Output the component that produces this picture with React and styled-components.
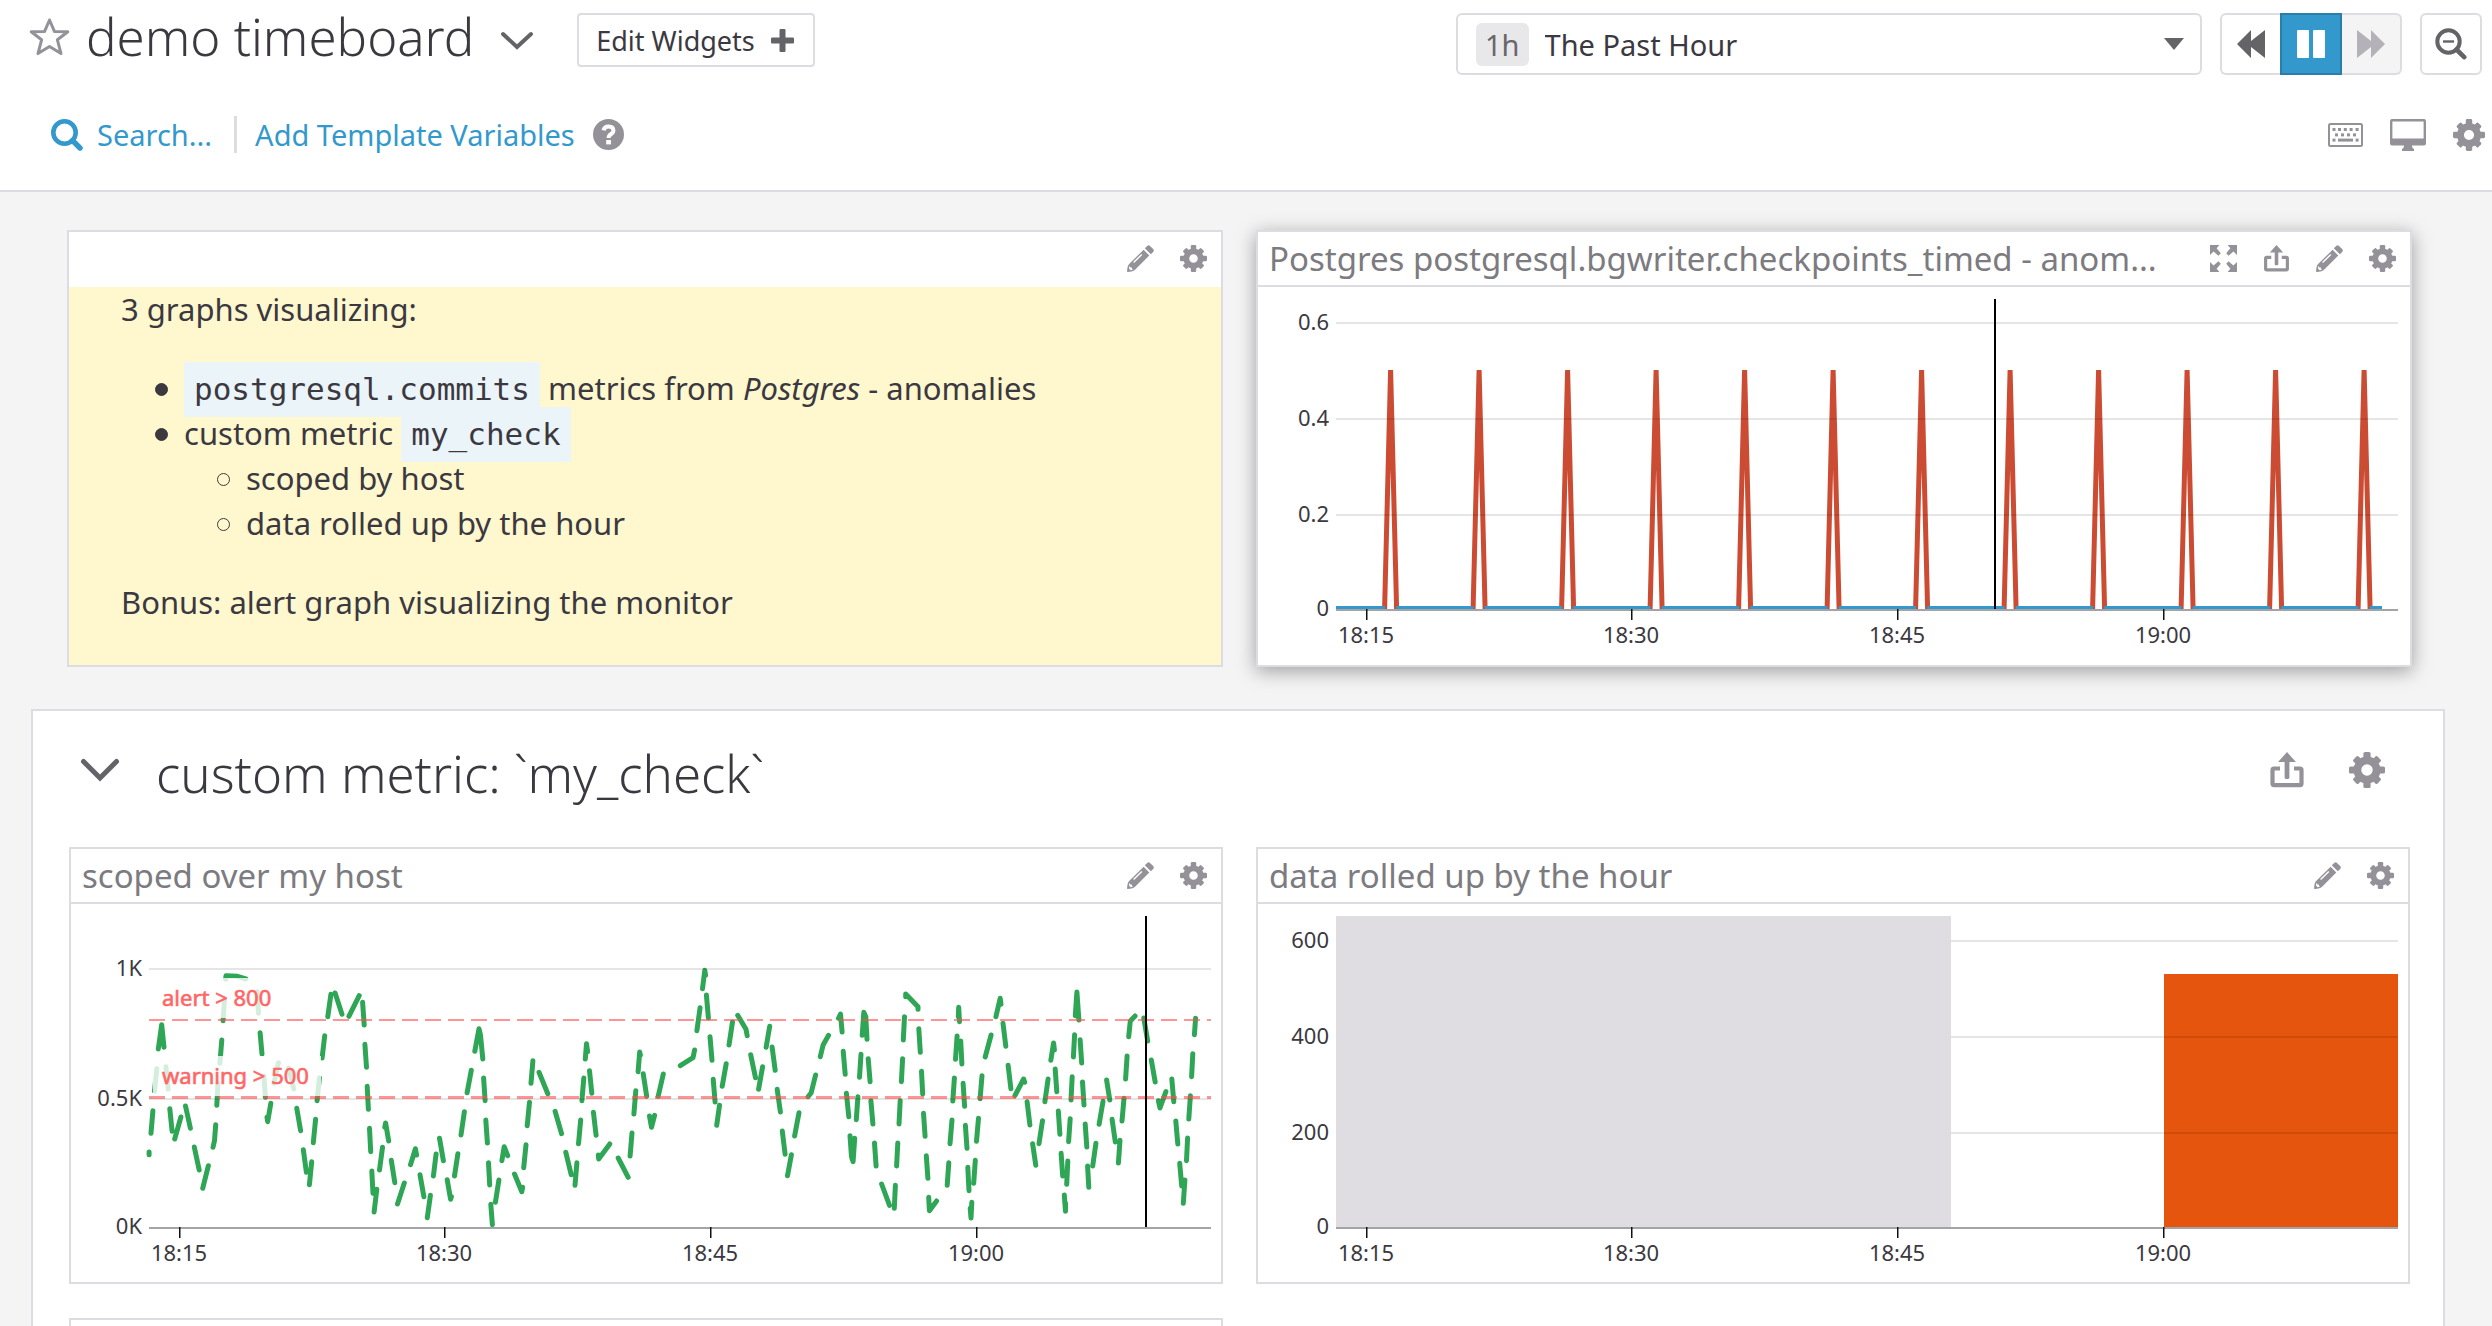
import React from "react";
import styled, { createGlobalStyle } from "styled-components";

const SANS = '"Noto Sans", "Open Sans", sans-serif';
const MONO = '"DejaVu Sans Mono", "Liberation Mono", monospace';
const LINE = "#dddce2";
const GREY = "#949298";
const INK = "#3b393f";
const BLUE = "#3399cc";

const GlobalStyle = createGlobalStyle`
  *, *::before, *::after { box-sizing: border-box; }
  body { margin: 0; background: #f4f4f4; color: ${INK}; font-family: ${SANS}; }
  button, select { font-family: inherit; color: inherit; }
`;

/* ---------- shell ---------- */

const Page = styled.div`
  height: 100vh;
  overflow: hidden;
  display: flex;
  flex-direction: column;
`;

const Header = styled.header`
  flex: none;
  display: flex;
  flex-direction: column;
  gap: 41px;
  padding: 13px 7px 37px 29px;
  background: #fff;
  border-bottom: 2px solid ${LINE};
`;

const Bar = styled.div`
  display: flex;
  justify-content: space-between;
  align-items: flex-start;
`;

const BarGroup = styled.div`
  display: flex;
  align-items: center;
  gap: ${(p) => p.$gap}px;
  height: ${(p) => p.$height}px;
  padding: 0 ${(p) => p.$end || 0}px 0 ${(p) => p.$start || 0}px;
`;

const TitleGroup = styled.div`
  display: flex;
  align-items: center;
  gap: 16px;
  padding-bottom: 8px;
`;

const Title = styled.h1`
  margin: 0;
  font-size: 51px;
  font-weight: 300;
  line-height: 54px;
  white-space: nowrap;
`;

const IconButton = styled.button`
  display: flex;
  flex: none;
  padding: 0;
  border: 0;
  background: none;
  color: ${(p) => p.$color || GREY};
  cursor: pointer;
  svg { display: block; }
`;

const EditButton = styled.button`
  display: flex;
  align-items: center;
  gap: 16px;
  height: 54px;
  padding: 0 19px 0 17px;
  margin-left: 17px;
  border: 2px solid ${LINE};
  border-radius: 4px;
  background: #fff;
  font-size: 27px;
  cursor: pointer;
`;

const RangeBox = styled.label`
  display: flex;
  align-items: center;
  gap: 16px;
  width: 746px;
  height: 62px;
  padding: 0 16px 0 18px;
  border: 2px solid ${LINE};
  border-radius: 6px;
  background: #fff;
`;

const RangeBadge = styled.span`
  padding: 0 9px;
  border-radius: 6px;
  background: #e8e8ea;
  color: #68666c;
  font-size: 29px;
  line-height: 43px;
`;

const RangeSelect = styled.select`
  flex: 1;
  min-width: 0;
  height: 43px;
  padding: 0;
  border: 0;
  appearance: none;
  background: none;
  font-size: 29px;
`;

const Playback = styled.div`
  display: flex;
`;

const PlayButton = styled.button`
  display: flex;
  align-items: center;
  justify-content: center;
  width: ${(p) => p.$width || 62}px;
  height: 62px;
  padding: 0;
  border: 2px solid ${(p) => (p.$active ? "#2a7ea8" : LINE)};
  border-width: ${(p) => p.$edges || "2px"};
  border-radius: ${(p) => p.$corners || "0"};
  background: ${(p) => (p.$active ? BLUE : p.disabled ? "#f4f4f4" : "#fff")};
  color: ${(p) => (p.$active ? "#fff" : p.disabled ? "#b4b2b8" : "#646367")};
`;

const TextLink = styled.a`
  display: flex;
  align-items: center;
  gap: 14px;
  color: ${BLUE};
  font-size: 29px;
  line-height: 37px;
  text-decoration: none;
  white-space: nowrap;
`;

const Divider = styled.span`
  width: 3px;
  height: 37px;
  margin-left: 4px;
  background: ${LINE};
`;

/* ---------- board ---------- */

const Board = styled.main`
  flex: 1;
  min-height: 0;
  padding: 38px 0 0;
`;

const Grid = styled.div`
  display: grid;
  grid-template-columns: 1fr 1fr;
  gap: 34px 33px;
  padding: 0 ${(p) => p.$end}px 0 ${(p) => p.$start}px;
`;

const Card = styled.section`
  min-width: 0;
  border: 2px solid ${LINE};
  background: #fff;
  box-shadow: ${(p) => (p.$raised ? "0 4px 18px rgba(0, 0, 0, 0.36)" : "none")};
`;

const CardHead = styled.header`
  display: flex;
  align-items: center;
  justify-content: space-between;
  gap: 24px;
  height: 55px;
  padding: 0 14px 0 11px;
  border-bottom: 2px solid ${(p) => (p.$plain ? "#fff" : LINE)};
`;

const CardTitle = styled.h3`
  margin: 0;
  min-width: 0;
  overflow: hidden;
  color: #7c7b7f;
  font-size: 33px;
  font-weight: 400;
  line-height: 50px;
  white-space: nowrap;
`;

const Actions = styled.div`
  display: flex;
  align-items: center;
  gap: ${(p) => p.$gap || 26}px;
`;

const Note = styled.div`
  height: 378px;
  padding: 0 52px;
  background: #fff8cf;
  font-size: 31px;
  line-height: 45px;
  p { margin: 0; }
  ul { margin: 34px 0; padding-left: 63px; list-style: none; }
  ul ul { margin: 0; padding-left: 62px; }
  li::before {
    content: "";
    display: inline-block;
    width: 13px;
    height: 13px;
    margin: 0 16px 0 -29px;
    border: 1px solid ${INK};
    border-radius: 50%;
    background: ${INK};
    vertical-align: 4px;
  }
  ul ul li::before { background: none; }
`;

const Code = styled.code`
  padding: 9px 10px 10px;
  background: #ebf4f9;
  font-family: ${MONO};
  font-size: 31px;
  line-height: 1;
`;

const Group = styled.section`
  margin: 42px 47px 0 31px;
  border: 2px solid ${LINE};
  background: #fff;
`;

const GroupHead = styled.header`
  display: flex;
  align-items: center;
  gap: 36px;
  height: 118px;
  margin-bottom: 18px;
  padding: 0 58px 0 47px;
`;

const GroupTitle = styled.h2`
  flex: 1;
  margin: 0;
  padding-top: 6px;
  font-size: 51px;
  font-weight: 300;
  line-height: 60px;
`;

const ChartSvg = styled.svg`
  display: block;
  width: 100%;
  height: auto;
  font-family: ${SANS};
  font-size: 22px;
  fill: ${INK};
`;

/* ---------- icons ---------- */

const Gear = ({ size = 27 }) => (
  <svg width={size} height={size} viewBox="-18 -18 36 36" aria-hidden="true">
    <circle r="9.6" fill="none" stroke="currentColor" strokeWidth="7.8" />
    {[0, 45, 90, 135, 180, 225, 270, 315].map((a) => (
      <rect key={a} x="-3.6" y={a % 90 ? -17 : -18} width="7.2" height="8" rx="1.6" fill="currentColor" transform={`rotate(${a})`} />
    ))}
  </svg>
);

const Pencil = () => (
  <svg width="27" height="27" viewBox="0 0 27 27" aria-hidden="true">
    <path d="M17.8 3.2 L20.2 .9 Q21.6 -.3 23 .9 L26.2 4.1 Q27.4 5.6 26.2 7 L23.8 9.3 Z" fill="currentColor" />
    <path d="M16.6 4.7 L22.3 10.5 L8.6 24.2 Q6.8 26.2 4.6 26.5 L.8 27 Q0 27 0 26.2 L.5 22.4 Q.8 20.2 2.6 18.6 Z" fill="currentColor" />
    <path d="M6.6 17.6 L14.8 9.4" stroke="#fff" strokeWidth="1.4" />
    <path d="M2.4 20.8 L3.4 22.6 L5 22.4 L4.9 24 L6.4 24.6 L3.6 25.2 L2 23.6 Z" fill="#fff" />
  </svg>
);

const Share = ({ size = 27 }) => (
  <svg width={size} height={size} viewBox="-1.5 0 36 36" aria-hidden="true">
    <path d="M9.5 16.5 H3.4 Q2 16.5 2 17.9 V31.6 Q2 33.2 3.4 33.2 H29.6 Q31 33.2 31 31.6 V17.9 Q31 16.5 29.6 16.5 H23.5" fill="none" stroke="currentColor" strokeWidth="4.2" />
    <path d="M16.5 0 L25.4 10 H18.9 V25.6 Q18.9 27 17.5 27 H15.5 Q14.1 27 14.1 25.6 V10 H7.6 Z" fill="currentColor" />
  </svg>
);

const Expand = () => (
  <svg width="27" height="27" viewBox="0 0 27 27" fill="currentColor" aria-hidden="true">
    {["", "translate(27 0) scale(-1 1)", "translate(0 27) scale(1 -1)", "translate(27 27) scale(-1 -1)"].map((t) => (
      <path key={t} transform={t || undefined} d="M0 0 H9.4 L6.6 3.2 L10.8 8.2 L8.4 10.8 L3.6 6.6 L0 10 Z" />
    ))}
  </svg>
);

const Star = () => (
  <svg width="41" height="39" viewBox="0 0 41 39" aria-hidden="true">
    <path d="M20.5 3 L25.4 14.4 L38.8 14.8 L28.4 22.8 L32 36.6 L20.5 29.4 L9 36.6 L12.6 22.8 L2.2 14.8 L15.6 14.4 Z" fill="none" stroke="currentColor" strokeWidth="3" strokeLinejoin="round" />
  </svg>
);

const Chevron = ({ width, height, weight }) => (
  <svg width={width} height={height} viewBox={`0 0 ${width} ${height}`} aria-hidden="true">
    <path d={`M${weight / 2 + 1} ${weight / 2 + 1} L${width / 2} ${height - weight + 1} L${width - weight / 2 - 1} ${weight / 2 + 1}`} fill="none" stroke="currentColor" strokeWidth={weight} strokeLinecap="round" />
  </svg>
);

const Plus = () => (
  <svg width="23" height="23" viewBox="0 0 23 23" fill="#646367" aria-hidden="true">
    <rect x="8.5" width="6" height="23" rx="1" />
    <rect y="8.5" width="23" height="6" rx="1" />
  </svg>
);

const Search = () => (
  <svg width="32" height="32" viewBox="0 0 32 32" fill="none" stroke="currentColor" aria-hidden="true">
    <circle cx="13.5" cy="13.5" r="11.2" strokeWidth="4.6" />
    <path d="M21.5 21.5 L29 29" strokeWidth="5.4" strokeLinecap="round" />
  </svg>
);

const Help = () => (
  <svg width="31" height="31" viewBox="0 0 31 31" aria-hidden="true">
    <circle cx="15.5" cy="15.5" r="15.5" fill="currentColor" />
    <path d="M10.6 11.4 Q11.2 7.4 15.6 7.4 Q20.4 7.4 20.4 11.4 Q20.4 13.6 17.8 15.2 Q15.6 16.6 15.6 19" fill="none" stroke="#fff" strokeWidth="4" />
    <rect x="13.2" y="21" width="4.8" height="4.4" fill="#fff" />
  </svg>
);

const Caret = () => (
  <svg width="20" height="12" viewBox="0 0 20 12" fill="#646367" aria-hidden="true">
    <path d="M0 0 H20 L10 12 Z" />
  </svg>
);

const Skip = ({ flip }) => (
  <svg width="28" height="28" viewBox="0 0 28 28" fill="currentColor" aria-hidden="true">
    <path transform={flip ? "translate(28 0) scale(-1 1)" : undefined} d="M0 14 L14 0 V11 L28 0 V28 L14 17 V28 Z" />
  </svg>
);

const Pause = () => (
  <svg width="28" height="28" viewBox="0 0 28 28" fill="currentColor" aria-hidden="true">
    <rect width="12" height="28" rx="1" />
    <rect x="16" width="12" height="28" rx="1" />
  </svg>
);

const ZoomOut = () => (
  <svg width="32" height="32" viewBox="0 0 32 32" fill="none" stroke="currentColor" aria-hidden="true">
    <circle cx="13.5" cy="13.5" r="11.2" strokeWidth="4" />
    <path d="M8 13.5 H19" strokeWidth="2.4" />
    <path d="M21.5 21.5 L29.2 29.2" strokeWidth="4.6" strokeLinecap="round" />
  </svg>
);

const Keyboard = () => (
  <svg width="35" height="24" viewBox="0 0 35 24" fill="currentColor" aria-hidden="true">
    <rect x="1" y="1" width="33" height="22" rx="1.5" fill="none" stroke="currentColor" strokeWidth="2" />
    {[4.5, 10, 15.8, 21.6, 27.6].map((x) => <rect key={x} x={x} y="5" width="3" height="3" />)}
    {[7, 13, 19, 25].map((x) => <rect key={x} x={x} y="10.4" width="3" height="3" />)}
    <rect x="4.5" y="15.6" width="3" height="3" />
    <rect x="10" y="15.6" width="15" height="3" />
    <rect x="27.6" y="15.6" width="3" height="3" />
  </svg>
);

const Monitor = () => (
  <svg width="36" height="32" viewBox="0 0 36 32" fill="currentColor" aria-hidden="true">
    <path fillRule="evenodd" d="M2 0 H34 Q36 0 36 2 V24.4 Q36 26.4 34 26.4 H2 Q0 26.4 0 24.4 V2 Q0 0 2 0 Z M2.4 2.4 V19.6 H33.6 V2.4 Z" />
    <path d="M14 26 H22 Q22 29.6 24 30 V32 H12 V30 Q14 29.6 14 26 Z" />
  </svg>
);

/* ---------- charts ---------- */

const PLOT = { left: 78, right: 1140, top: 12, height: 378 };
const TICKS = [[109, "18:15"], [374, "18:30"], [640, "18:45"], [906, "19:00"]];

function Chart({ width, label, rows, base, baseLabel, under, cursor, children }) {
  return (
    <ChartSvg viewBox={`0 0 ${width} ${PLOT.height}`} role="img" aria-label={label}>
      {under}
      {rows.map(([y, text, from]) => (
        <g key={text}>
          <rect x={from || PLOT.left} y={y - 1} width={PLOT.right - (from || PLOT.left)} height="2" fill="#000" fillOpacity="0.1" />
          <text x="71" y={y + 7} textAnchor="end">{text}</text>
        </g>
      ))}
      <rect x={PLOT.left} y={base} width={PLOT.right - PLOT.left} height="2" fill="#a4a3a7" />
      <text x="71" y={base + 7} textAnchor="end">{baseLabel}</text>
      {TICKS.map(([x, text]) => (
        <g key={text}>
          <rect x={x - 1} y={base} width="1.5" height="11" fill="#111" />
          <text x={x - 1} y={base + 34} textAnchor="middle">{text}</text>
        </g>
      ))}
      {children}
      {cursor && <rect x={cursor} y={PLOT.top} width="2" height={base - PLOT.top} fill="#000" />}
    </ChartSvg>
  );
}

const PEAKS = Array.from({ length: 12 }, (_, i) => 132.6 + i * 88.5);

function CheckpointsChart() {
  const floor = 320.5;
  const stops = [PLOT.left, ...PEAKS.flatMap((x) => [x - 5.6, x + 5.6]), 1124];
  const flat = [];
  for (let i = 0; i < stops.length; i += 2) flat.push(`M${stops[i]} ${floor}H${stops[i + 1]}`);
  return (
    <Chart
      width={1152}
      label="Timed checkpoints"
      rows={[[36, "0.6"], [132, "0.4"], [228, "0.2"]]}
      base={322}
      baseLabel="0"
      cursor={736}
      under={
        <g fill="none">
          <path d={PEAKS.map((x) => `M${x - 6} 322L${x} 83L${x + 6} 322`).join("")} stroke="#cc4b33" strokeWidth="5" strokeLinejoin="bevel" />
          <path d={flat.join("")} stroke={BLUE} strokeWidth="3" />
        </g>
      }
    />
  );
}

/* Runs of the dashed series; each run is a list of x y pairs on the recording grid. */
const RUNS_EARLY = "259 786 259 794;264 730 269 662;273 604 279 536;283 477 292 404 298 472;303 530 309 598;313 656 319 724;326 747 342 681;354 648 367 715;377 771 390 840;399 895 414 827;426 772 430 752 433 704;436 646 439 578;444 520 449 450;452 392 456 330;459 268 460 257 490 259 512 267;541 305 545 370;549 428 554 492;559 558 563 622;567 682 569 695 577 640;585 580 597 518;624 534 637 597;645 655 655 722;662 779 670 847;678 884 684 815;688 758 694 688;698 632 704 563;711 504 718 437;726 380 734 313;745 309 763 373;781 379 808 317;817 337 821 405;823 463 827 532;829 589 832 658;835 715 838 785;841 843 844 910;847 966 854 898;861 840 869 772;875 712 877 699 885 753;892 811 901 878;908 942 926 879;942 824 955 776 958 795;967 854 977 920;986 983 994 916;1002 858 1009 792;1018 745 1028 812;1038 869 1047 928 1049 920;1057 858 1066 791;1074 735 1083 665;1090 608 1101 541;1110 484 1121 416 1125 436 1131 507;1133 564 1137 632;1139 690 1143 759;1146 818 1149 885;1152 943 1156 1004;1164 937 1173 870;1181 812 1187 770 1196 797;1214 852 1233 905 1235 892;1238 833 1244 764;1247 707 1253 637;1257 580 1262 512;1278 547 1301 611;1320 664 1337 731;1348 787 1362 854;1372 886 1377 818;1381 761 1387 690;1390 632 1395 564;1399 507 1402 461 1405 485;1410 542 1416 610;1420 667 1427 736;1433 795 1434 807 1463 762;1485 804 1511 862;1516 798 1521 729;1526 672 1531 602;1537 545 1541 486 1543 495";
const RUNS_LATE = "8 551 17 619;24 678 29 712 37 676;46 619 59 552;102 527 134 503 138 480;144 422 152 353;158 296 164 241 166 256;168 315 173 384;177 440 182 511;185 568 190 636;194 706 201 646;208 589 218 521;225 465 234 396;247 376 268 418 271 437;280 494 292 563;300 598 310 530;319 472 328 409;334 471 342 541;347 598 355 666;360 723 367 793;373 857 383 794;391 738 402 668;425 620 433 608 444 555;456 500 463 465 477 436;502 385 507 372 511 426;514 484 519 553;522 610 528 680;531 737 535 800 539 815 543 745;547 689 551 620;555 562 559 493;562 436 566 367 571 380 574 448;577 506 582 575;584 632 589 702;593 759 597 828;611 882 631 946;643 955 646 886;649 828 652 759;655 702 658 632;661 575 664 506;666 450 669 380;672 320 672 312 703 350 703 358;705 416 709 487;712 544 715 612;717 670 721 739;724 797 728 865;730 922 732 962 750 933;777 886 781 818;784 761 789 690;791 633 795 564;798 508 802 438;805 380 806 352 808 395;811 453 814 522;817 580 821 649;823 706 827 775;829 832 832 902;835 955 837 984 839 937;844 880 848 811;851 754 856 685;860 626 865 557;873 501 888 435;900 380 911 325 913 343;918 400 925 469;931 526 938 596;948 617 970 567 973 577;979 635 986 705;993 761 1001 826;1009 761 1018 692;1024 635 1032 567;1039 511 1046 459 1048 480;1050 537 1054 605;1058 663 1062 733;1065 790 1069 858;1073 915 1076 964 1076 940;1079 883 1082 813;1084 755 1088 686;1090 630 1093 560;1096 501 1099 434;1101 377 1105 306 1110 390;1113 449 1117 519;1119 576 1123 645;1126 702 1130 771;1132 828 1135 892;1145 828 1153 760;1161 703 1171 634;1180 570 1188 630;1194 688 1202 756;1210 819 1214 751;1219 693 1224 625;1228 567 1232 498;1236 440 1240 393 1252 378;1274 384 1284 453;1293 510 1303 576;1311 632 1315 654 1330 605;1345 567 1350 635;1355 693 1360 762;1365 820 1370 888;1374 940 1378 870;1382 812 1385 744;1388 687 1392 617;1395 560 1398 491;1402 434 1405 385";

const runsToPath = (runs, start, perPixel) =>
  runs
    .split(";")
    .map((run) => {
      const n = run.split(" ").map(Number);
      let d = "";
      for (let i = 0; i < n.length; i += 2) {
        d += `${i ? "L" : "M"}${(start + n[i] / perPixel).toFixed(1)} ${(n[i + 1] / 3 - 14).toFixed(1)}`;
      }
      return d;
    })
    .join("");

const SERIES = runsToPath(RUNS_EARLY, -21, 2.6133) + runsToPath(RUNS_LATE, 569, 2.529);

function HostChart() {
  return (
    <Chart
      width={1150}
      label="my_check scoped over my host"
      rows={[[65, "1K"], [195, "0.5K"]]}
      base={323}
      baseLabel="0K"
      cursor={1074}
      under={<path d={SERIES} fill="none" stroke="#2fa656" strokeWidth="5" strokeLinecap="round" strokeLinejoin="round" />}
    >
      <rect x="82" y="74" width="128" height="40" fill="#fff" fillOpacity="0.8" />
      <rect x="82" y="152" width="168" height="40" fill="#fff" fillOpacity="0.8" />
      <g stroke="#ff4d4d" strokeOpacity="0.6" strokeDasharray="16 7">
        <path d="M78 116H1140" strokeWidth="2" />
        <path d="M78 193.5H1140" strokeWidth="3" />
      </g>
      <g fill="#ff6666" stroke="#ff6666" strokeWidth="0.6">
        <text x="91" y="102">alert &gt; 800</text>
        <text x="91" y="180">warning &gt; 500</text>
      </g>
    </Chart>
  );
}

function RollupChart() {
  return (
    <Chart
      width={1150}
      label="my_check rolled up by the hour"
      rows={[[37, "600", 693], [133, "400", 693], [229, "200", 693]]}
      base={323}
      baseLabel="0"
      under={
        <g>
          <rect x="78" y="12" width="615" height="311" fill="#dfdde2" />
          <rect x="906" y="70" width="234" height="253" fill="#e6550d" />
        </g>
      }
    />
  );
}

/* ---------- page ---------- */

function Widget({ title = "", raised, plain, children }) {
  return (
    <Card $raised={raised}>
      <CardHead $plain={plain}>
        <CardTitle>{title}</CardTitle>
        <Actions>
          {raised && <IconButton aria-label="Full screen"><Expand /></IconButton>}
          {raised && <IconButton aria-label="Share"><Share /></IconButton>}
          <IconButton aria-label="Edit"><Pencil /></IconButton>
          <IconButton aria-label="Settings"><Gear /></IconButton>
        </Actions>
      </CardHead>
      {children}
    </Card>
  );
}

export default function App() {
  return (
    <Page>
      <GlobalStyle />
      <Header>
        <Bar>
          <BarGroup $gap={26} $height={54}>
            <TitleGroup>
              <IconButton aria-label="Favorite"><Star /></IconButton>
              <Title>demo timeboard</Title>
            </TitleGroup>
            <IconButton $color="#646367" aria-label="Board menu"><Chevron width={34} height={19} weight={4} /></IconButton>
            <EditButton>Edit Widgets <Plus /></EditButton>
          </BarGroup>
          <BarGroup $gap={18} $height={62} $end={3}>
            <RangeBox>
              <RangeBadge>1h</RangeBadge>
              <RangeSelect aria-label="Time range" defaultValue="hour">
                <option value="hour">The Past Hour</option>
              </RangeSelect>
              <Caret />
            </RangeBox>
            <Playback>
              <PlayButton $width={60} $edges="2px 0 2px 2px" $corners="6px 0 0 6px" aria-label="Back"><Skip /></PlayButton>
              <PlayButton $active aria-label="Pause"><Pause /></PlayButton>
              <PlayButton $width={60} $edges="2px 2px 2px 0" $corners="0 6px 6px 0" disabled aria-label="Forward"><Skip flip /></PlayButton>
            </Playback>
            <PlayButton $corners="6px" aria-label="Zoom out"><ZoomOut /></PlayButton>
          </BarGroup>
        </Bar>
        <Bar>
          <BarGroup $gap={18} $height={37} $start={22}>
            <TextLink href="#search"><Search />Search...</TextLink>
            <Divider />
            <TextLink href="#variables">Add Template Variables</TextLink>
            <IconButton aria-label="Help"><Help /></IconButton>
          </BarGroup>
          <BarGroup $gap={27} $height={37}>
            <IconButton aria-label="Keyboard shortcuts"><Keyboard /></IconButton>
            <IconButton aria-label="TV mode"><Monitor /></IconButton>
            <IconButton aria-label="Board settings"><Gear size={32} /></IconButton>
          </BarGroup>
        </Bar>
      </Header>
      <Board>
        <Grid $start={67} $end={80}>
          <Widget plain>
            <Note>
              <p>3 graphs visualizing:</p>
              <ul>
                <li><Code>postgresql.commits</Code> metrics from <em>Postgres</em> - anomalies</li>
                <li>
                  custom metric <Code>my_check</Code>
                  <ul>
                    <li>scoped by host</li>
                    <li>data rolled up by the hour</li>
                  </ul>
                </li>
              </ul>
              <p>Bonus: alert graph visualizing the monitor</p>
            </Note>
          </Widget>
          <Widget raised title="Postgres postgresql.bgwriter.checkpoints_timed - anom...">
            <CheckpointsChart />
          </Widget>
        </Grid>
        <Group>
          <GroupHead>
            <IconButton $color="#646367" aria-label="Collapse group"><Chevron width={40} height={24} weight={5} /></IconButton>
            <GroupTitle>custom metric: `my_check`</GroupTitle>
            <Actions $gap={44}>
              <IconButton aria-label="Share group"><Share size={36} /></IconButton>
              <IconButton aria-label="Group settings"><Gear size={36} /></IconButton>
            </Actions>
          </GroupHead>
          <Grid $start={36} $end={33}>
            <Widget title="scoped over my host"><HostChart /></Widget>
            <Widget title="data rolled up by the hour"><RollupChart /></Widget>
            <Widget />
          </Grid>
        </Group>
      </Board>
    </Page>
  );
}
